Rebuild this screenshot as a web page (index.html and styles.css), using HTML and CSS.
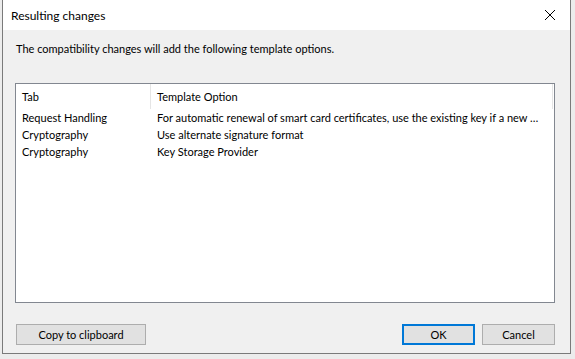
FILE: index.html
```html
<!DOCTYPE html>
<html lang="en">
<head>
  <meta charset="UTF-8">
  <title>Resulting changes</title>
  <link rel="stylesheet" href="styles.css">
</head>
<body>
  <div class="dialog">
    <div class="titlebar">
      <span class="title">Resulting changes</span>
      <svg class="close" width="12" height="12" viewBox="0 0 12 12">
        <path d="M1 1 L11 11 M11 1 L1 11" stroke="#000" stroke-width="1" fill="none"/>
      </svg>
    </div>

    <div class="content">
      <p class="intro">The compatibility changes will add the following template options.</p>

      <div class="listview">
        <div class="header">
          <div class="col col-tab">Tab</div>
          <div class="col col-opt">Template Option</div>
        </div>
        <div class="row">
          <div class="col col-tab">Request Handling</div>
          <div class="col col-opt">For automatic renewal of smart card certificates, use the existing key if a new …</div>
        </div>
        <div class="row">
          <div class="col col-tab">Cryptography</div>
          <div class="col col-opt">Use alternate signature format</div>
        </div>
        <div class="row">
          <div class="col col-tab">Cryptography</div>
          <div class="col col-opt">Key Storage Provider</div>
        </div>
      </div>

      <div class="buttons">
        <button class="btn btn-wide">Copy to clipboard</button>
        <div class="spacer"></div>
        <button class="btn btn-default">OK</button>
        <button class="btn">Cancel</button>
      </div>
    </div>
  </div>
</body>
</html>
```

FILE: styles.css
```css
* {
  margin: 0;
  padding: 0;
  box-sizing: border-box;
}

body {
  width: 575px;
  height: 359px;
  overflow: hidden;
  background: #ececec;
  font-family: Lato, 'Noto Sans', sans-serif;
  font-size: 11px;
  color: #000;
}

.dialog {
  width: 569px;
  height: 355px;
  margin: -1px 0 0 2px;
  border: 1px solid #7a7a7a;
  background: #f0f0f0;
  display: flex;
  flex-direction: column;
}

.titlebar {
  height: 30px;
  background: #fff;
  display: flex;
  align-items: center;
  padding: 0 12px 0 8px;
}

.title {
  flex: 1;
  font-size: 12px;
}

.close {
  margin-right: 2px;
}

.content {
  flex: 1;
  padding: 10px 15px 0 12px;
  display: flex;
  flex-direction: column;
}

.intro {
  height: 17px;
  line-height: 17px;
  padding-left: 1px;
}

.listview {
  margin-top: 26px;
  height: 220px;
  background: #fff;
  border: 1px solid #828790;
}

.header {
  display: flex;
  height: 25px;
  align-items: center;
  margin-right: 1px;
  border-right: 1px solid #e5e5e5;
}

.header .col-tab {
  border-right: 1px solid #e5e5e5;
  height: 100%;
  display: flex;
  align-items: center;
}

.row {
  display: flex;
  height: 17px;
  line-height: 17px;
}

.col {
  white-space: nowrap;
  overflow: hidden;
}

.col-tab {
  flex: none;
  width: 135px;
  padding-left: 6px;
}

.col-opt {
  flex: 1;
  min-width: 0;
  padding: 0 4px 0 6px;
  text-overflow: ellipsis;
}

.buttons {
  margin-top: 21px;
  display: flex;
  gap: 7px;
  padding-left: 1px;
}

.spacer {
  flex: 1;
}

.btn {
  width: 73px;
  height: 21px;
  background: #e1e1e1;
  border: 1px solid #adadad;
  font-family: inherit;
  font-size: 11px;
  color: #000;
}

.btn-wide {
  width: 130px;
}

.btn-default {
  border: 2px solid #0078d7;
}
```
